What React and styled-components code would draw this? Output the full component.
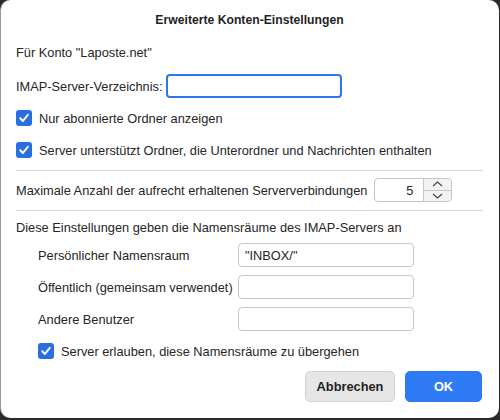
import styled, { createGlobalStyle } from "styled-components";

const GlobalStyle = createGlobalStyle`
  html, body {
    margin: 0;
    padding: 0;
    background: #2a2a2a;
  }
  body {
    font-family: "Liberation Sans", Arial, sans-serif;
    font-size: 12.8px;
    color: #262626;
  }
`;

const Window = styled.div`
  width: 499px;
  height: 418px;
  background: #ffffff;
  border-left: 1px solid #9a9a9a;
  border-radius: 10px;
  padding: 0 16px 0 15px;
  box-sizing: border-box;
  display: flex;
  flex-direction: column;
  white-space: nowrap;
`;

const Title = styled.div`
  height: 40px;
  display: flex;
  align-items: center;
  justify-content: center;
  font-size: 12.2px;
  font-weight: 700;
  color: #1f1f1f;
`;

const Row = styled.div`
  height: 24px;
  display: flex;
  align-items: center;
  gap: ${({ gap }) => gap || 0}px;
  margin-top: ${({ mt }) => mt || 0}px;
  padding-left: ${({ indent }) => indent || 0}px;
`;

const TextInput = styled.input`
  box-sizing: border-box;
  width: ${({ w }) => w || 176}px;
  height: 24px;
  border: ${({ focused }) => (focused ? "2px solid #2f74ee" : "1px solid #c6c6c6")};
  border-radius: 4px;
  padding: 0 6px;
  font: inherit;
  color: #262626;
  outline: none;
  background: #fff;
`;

const Box = styled.span`
  width: 16px;
  height: 16px;
  border-radius: 3px;
  background: #2b6ee0;
  display: inline-flex;
  align-items: center;
  justify-content: center;
  margin-right: 7px;
  flex-shrink: 0;
`;

const Separator = styled.div`
  height: 1px;
  background: #d6d6d6;
  margin-top: ${({ mt }) => mt}px;
`;

const Spinner = styled.div`
  display: flex;
  height: 24px;
  margin-left: 7px;
  border: 1px solid #c6c6c6;
  border-radius: 4px;
  box-sizing: border-box;
  overflow: hidden;
`;

const SpinValue = styled.div`
  width: 48px;
  display: flex;
  align-items: center;
  justify-content: flex-end;
  padding-right: 10px;
  box-sizing: border-box;
`;

const Stepper = styled.div`
  width: 27px;
  display: flex;
  flex-direction: column;
  background: #f3f3f3;
  border-left: 1px solid #c6c6c6;
`;

const StepHalf = styled.div`
  flex: 1;
  display: flex;
  align-items: center;
  justify-content: center;
  & + & {
    border-top: 1px solid #c6c6c6;
  }
`;

const NsGrid = styled.div`
  display: grid;
  grid-template-columns: 200px 176px;
  grid-auto-rows: 24px;
  row-gap: 8px;
  padding-left: 22px;
  margin-top: 4px;
  align-items: center;
`;

const Buttons = styled.div`
  display: flex;
  justify-content: flex-end;
  gap: 10px;
  margin-top: 8px;
  padding-right: 1px;
`;

const Button = styled.button`
  height: 31px;
  width: ${({ w }) => w}px;
  border-radius: 5px;
  font: inherit;
  font-weight: 700;
  border: 1px solid ${({ primary }) => (primary ? "#2f78ee" : "#d2d2d2")};
  background: ${({ primary }) => (primary ? "#2f7bf5" : "#e6e6e6")};
  color: ${({ primary }) => (primary ? "#ffffff" : "#1f1f1f")};
  padding: 0;
`;

function Check({ children, mt, indent }) {
  return (
    <Row mt={mt} indent={indent}>
      <Box>
        <svg width="12" height="12" viewBox="0 0 12 12">
          <path d="M2.3 6.3 L4.9 9 L9.8 2.8" fill="none" stroke="#fff" strokeWidth="2" strokeLinecap="round" strokeLinejoin="round" />
        </svg>
      </Box>
      {children}
    </Row>
  );
}

export default function App() {
  return (
    <>
      <GlobalStyle />
      <Window>
        <Title>Erweiterte Konten-Einstellungen</Title>
        <Row>Für Konto "Laposte.net"</Row>
        <Row mt={10} gap={3}>
          IMAP-Server-Verzeichnis:
          <TextInput focused w={176} />
        </Row>
        <Check mt={8}>Nur abonnierte Ordner anzeigen</Check>
        <Check mt={8}>Server unterstützt Ordner, die Unterordner und Nachrichten enthalten</Check>
        <Separator mt={8} />
        <Row mt={7}>
          Maximale Anzahl der aufrecht erhaltenen Serververbindungen
          <Spinner>
            <SpinValue>5</SpinValue>
            <Stepper>
              <StepHalf>
                <svg width="11" height="6" viewBox="0 0 11 6">
                  <path d="M1 5 L5.5 1 L10 5" fill="none" stroke="#444" strokeWidth="1.2" />
                </svg>
              </StepHalf>
              <StepHalf>
                <svg width="11" height="6" viewBox="0 0 11 6">
                  <path d="M1 1 L5.5 5 L10 1" fill="none" stroke="#444" strokeWidth="1.2" />
                </svg>
              </StepHalf>
            </Stepper>
          </Spinner>
        </Row>
        <Separator mt={8} />
        <Row mt={4}>Diese Einstellungen geben die Namensräume des IMAP-Servers an</Row>
        <NsGrid>
          <span>Persönlicher Namensraum</span>
          <TextInput defaultValue={'"INBOX/"'} />
          <span>Öffentlich (gemeinsam verwendet)</span>
          <TextInput />
          <span>Andere Benutzer</span>
          <TextInput />
        </NsGrid>
        <Check mt={8} indent={22}>Server erlauben, diese Namensräume zu übergehen</Check>
        <Buttons>
          <Button w={90}>Abbrechen</Button>
          <Button primary w={77}>OK</Button>
        </Buttons>
      </Window>
    </>
  );
}
